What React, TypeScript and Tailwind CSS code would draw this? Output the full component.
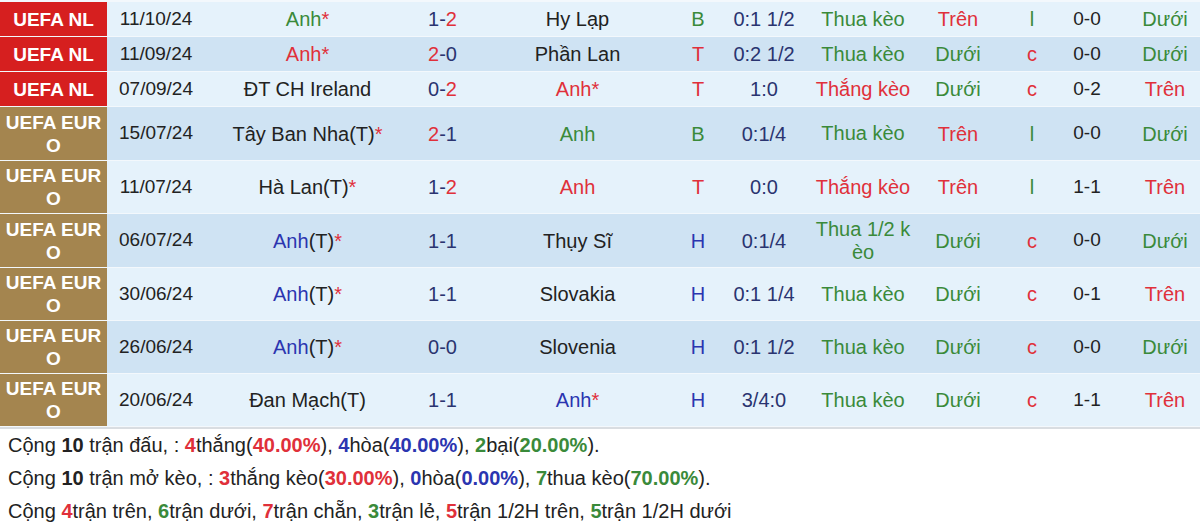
import React from 'react';

type Part = { t: string; c?: string; b?: boolean };

const G = 'text-[#3a8a3a]';
const R = 'text-[#e0303a]';
const B = 'text-[#2b35b0]';
const N = 'text-[#2a3470]';
const D = 'text-[#222]';

type Row = {
  league: 'nl' | 'euro';
  h: string;
  date: string;
  home: Part[];
  score: Part[];
  away: Part[];
  res: Part;
  hc: string;
  keo: Part;
  ou: Part;
  oe: Part;
  ht: string;
  htou: Part;
};

const star: Part = { t: '*', c: R };
const tren: Part = { t: 'Trên', c: R };
const duoi: Part = { t: 'Dưới', c: G };
const thua: Part = { t: 'Thua kèo', c: G };
const thang: Part = { t: 'Thắng kèo', c: R };

const rows: Row[] = [
  { league: 'nl', h: 'h-[34px]', date: '11/10/24', home: [{ t: 'Anh', c: G }, star], score: [{ t: '1-', c: N }, { t: '2', c: R }], away: [{ t: 'Hy Lạp', c: D }], res: { t: 'B', c: G }, hc: '0:1 1/2', keo: thua, ou: tren, oe: { t: 'l', c: G }, ht: '0-0', htou: duoi },
  { league: 'nl', h: 'h-[34px]', date: '11/09/24', home: [{ t: 'Anh*', c: R }], score: [{ t: '2', c: R }, { t: '-0', c: N }], away: [{ t: 'Phần Lan', c: D }], res: { t: 'T', c: R }, hc: '0:2 1/2', keo: thua, ou: duoi, oe: { t: 'c', c: R }, ht: '0-0', htou: duoi },
  { league: 'nl', h: 'h-[34px]', date: '07/09/24', home: [{ t: 'ĐT CH Ireland', c: D }], score: [{ t: '0-', c: N }, { t: '2', c: R }], away: [{ t: 'Anh*', c: R }], res: { t: 'T', c: R }, hc: '1:0', keo: thang, ou: duoi, oe: { t: 'c', c: R }, ht: '0-2', htou: tren },
  { league: 'euro', h: 'h-[53px]', date: '15/07/24', home: [{ t: 'Tây Ban Nha(T)', c: D }, star], score: [{ t: '2', c: R }, { t: '-1', c: N }], away: [{ t: 'Anh', c: G }], res: { t: 'B', c: G }, hc: '0:1/4', keo: thua, ou: tren, oe: { t: 'l', c: G }, ht: '0-0', htou: duoi },
  { league: 'euro', h: 'h-[52px]', date: '11/07/24', home: [{ t: 'Hà Lan(T)', c: D }, star], score: [{ t: '1-', c: N }, { t: '2', c: R }], away: [{ t: 'Anh', c: R }], res: { t: 'T', c: R }, hc: '0:0', keo: thang, ou: tren, oe: { t: 'l', c: G }, ht: '1-1', htou: tren },
  { league: 'euro', h: 'h-[53px]', date: '06/07/24', home: [{ t: 'Anh', c: B }, { t: '(T)', c: D }, star], score: [{ t: '1-1', c: N }], away: [{ t: 'Thụy Sĩ', c: D }], res: { t: 'H', c: B }, hc: '0:1/4', keo: { t: 'Thua 1/2 kèo', c: G }, ou: duoi, oe: { t: 'c', c: R }, ht: '0-0', htou: duoi },
  { league: 'euro', h: 'h-[52px]', date: '30/06/24', home: [{ t: 'Anh', c: B }, { t: '(T)', c: D }, star], score: [{ t: '1-1', c: N }], away: [{ t: 'Slovakia', c: D }], res: { t: 'H', c: B }, hc: '0:1 1/4', keo: thua, ou: duoi, oe: { t: 'c', c: R }, ht: '0-1', htou: tren },
  { league: 'euro', h: 'h-[52px]', date: '26/06/24', home: [{ t: 'Anh', c: B }, { t: '(T)', c: D }, star], score: [{ t: '0-0', c: N }], away: [{ t: 'Slovenia', c: D }], res: { t: 'H', c: B }, hc: '0:1 1/2', keo: thua, ou: duoi, oe: { t: 'c', c: R }, ht: '0-0', htou: duoi },
  { league: 'euro', h: 'h-[52px]', date: '20/06/24', home: [{ t: 'Đan Mạch(T)', c: D }], score: [{ t: '1-1', c: N }], away: [{ t: 'Anh', c: B }, star], res: { t: 'H', c: B }, hc: '3/4:0', keo: thua, ou: duoi, oe: { t: 'c', c: R }, ht: '1-1', htou: tren },
];

const Txt = ({ parts }: { parts: Part[] }) => (
  <>
    {parts.map((p, i) => (
      <span key={i} className={p.c}>
        {p.t}
      </span>
    ))}
  </>
);

const Cell = ({ children, className = '' }: { children: React.ReactNode; className?: string }) => (
  <div className={`flex items-center justify-center text-center ${className}`}>{children}</div>
);

const summary: Part[][] = [
  [
    { t: 'Cộng ' }, { t: '10', b: true }, { t: ' trận đấu, : ' }, { t: '4', c: R, b: true }, { t: 'thắng(' }, { t: '40.00%', c: R, b: true },
    { t: '), ' }, { t: '4', c: B, b: true }, { t: 'hòa(' }, { t: '40.00%', c: B, b: true }, { t: '), ' }, { t: '2', c: G, b: true },
    { t: 'bại(' }, { t: '20.00%', c: G, b: true }, { t: ').' },
  ],
  [
    { t: 'Cộng ' }, { t: '10', b: true }, { t: ' trận mở kèo, : ' }, { t: '3', c: R, b: true }, { t: 'thắng kèo(' }, { t: '30.00%', c: R, b: true },
    { t: '), ' }, { t: '0', c: B, b: true }, { t: 'hòa(' }, { t: '0.00%', c: B, b: true }, { t: '), ' }, { t: '7', c: G, b: true },
    { t: 'thua kèo(' }, { t: '70.00%', c: G, b: true }, { t: ').' },
  ],
  [
    { t: 'Cộng ' }, { t: '4', c: R, b: true }, { t: 'trận trên, ' }, { t: '6', c: G, b: true }, { t: 'trận dưới, ' }, { t: '7', c: R, b: true },
    { t: 'trận chẵn, ' }, { t: '3', c: G, b: true }, { t: 'trận lẻ, ' }, { t: '5', c: R, b: true }, { t: 'trận 1/2H trên, ' },
    { t: '5', c: G, b: true }, { t: 'trận 1/2H dưới' },
  ],
];

export default function App() {
  return (
    <div className="w-[1200px] h-[530px] overflow-hidden bg-white font-[family-name:Liberation_Sans,Arial,sans-serif] text-[20px] text-[#222]">
      <div className="flex flex-col gap-px bg-[#f3f8fc] pt-[2px] pb-px">
        {rows.map((r, i) => (
          <div
            key={i}
            className={`grid grid-cols-[107px_98px_205px_65px_205px_36px_96px_102px_88px_60px_50px_88px] ${r.h} ${
              i % 2 === 0 ? 'bg-[#e5f2fb]' : 'bg-[#cfe3f3]'
            }`}
          >
            <Cell
              className={`font-bold text-white text-[19px] leading-[23px] break-all px-[2px] ${
                r.league === 'nl' ? 'bg-[#d61f1f]' : 'bg-[#a4854f]'
              }`}
            >
              {r.league === 'nl' ? 'UEFA NL' : 'UEFA EURO'}
            </Cell>
            <Cell className="text-[19px]">{r.date}</Cell>
            <Cell>
              <Txt parts={r.home} />
            </Cell>
            <Cell>
              <Txt parts={r.score} />
            </Cell>
            <Cell>
              <Txt parts={r.away} />
            </Cell>
            <Cell className={r.res.c}>{r.res.t}</Cell>
            <Cell className={N}>{r.hc}</Cell>
            <Cell className={`leading-[23px] break-all px-[2px] ${r.keo.c}`}>{r.keo.t}</Cell>
            <Cell className={r.ou.c}>{r.ou.t}</Cell>
            <Cell className={r.oe.c}>{r.oe.t}</Cell>
            <Cell className="text-[19px]">{r.ht}</Cell>
            <Cell className={`pl-[18px] ${r.htou.c}`}>{r.htou.t}</Cell>
          </div>
        ))}
      </div>
      <div className="border-t-2 border-[#d9dde1] px-[8px]">
        {summary.map((line, i) => (
          <div key={i} className="h-[33px] leading-[33px] whitespace-nowrap">
            {line.map((p, j) => (
              <span key={j} className={`${p.c ?? ''} ${p.b ? 'font-bold' : ''}`}>
                {p.t}
              </span>
            ))}
          </div>
        ))}
      </div>
    </div>
  );
}
